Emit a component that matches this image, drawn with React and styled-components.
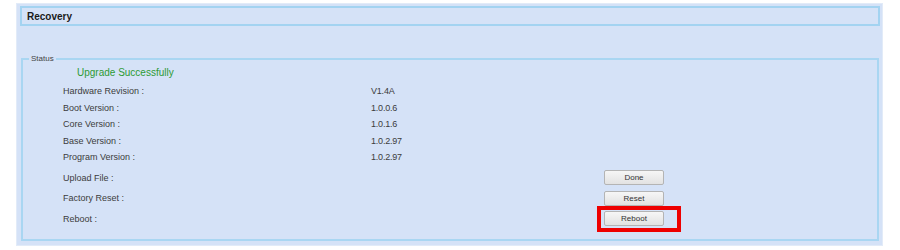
import React from "react";
import styled, { createGlobalStyle } from "styled-components";

const Global = createGlobalStyle`
  body {
    margin: 0;
    background: #ffffff;
    font-family: "Liberation Sans", Arial, sans-serif;
  }
`;

const Panel = styled.div`
  margin: 3px 0 0 16px;
  width: 867px;
  box-sizing: border-box;
  padding: 2px 2px 4px 3px;
  background: #d5e2f7;
  border: 1px solid #e2ebf8;
`;

const Header = styled.div`
  height: 20px;
  box-sizing: border-box;
  border: 2px solid #a3d3f1;
  padding-left: 5px;
  display: flex;
  align-items: center;
  font-size: 10px;
  font-weight: bold;
  color: #1a1a1a;
`;

const Spacer = styled.div`
  height: 28px;
`;

const Status = styled.fieldset`
  margin: 0 1px;
  padding: 0 0 10px 0;
  border: 2px solid #a9d6f2;
  min-width: 0;
`;

const Legend = styled.legend`
  margin-left: 6px;
  padding: 0 2px;
  font-size: 8px;
  line-height: 10px;
  color: #444;
`;

const Message = styled.div`
  padding: 2px 0 3px 54px;
  line-height: 14px;
  font-size: 10px;
  color: #2c9a34;
`;

const Rows = styled.div`
  display: grid;
  grid-template-columns: 308px 233px 60px;
  padding-left: 40px;
`;

const Cell = styled.div`
  height: ${(p) => (p.$tall ? "20.5px" : "16.5px")};
  margin-top: ${(p) => (p.$first ? "2px" : "0")};
  display: flex;
  align-items: center;
  font-size: 9px;
  color: #3c3c3c;
  letter-spacing: ${(p) => (p.$value ? "-0.2px" : "0")};
  position: relative;
`;

const Button = styled.button`
  width: 60px;
  height: 15px;
  padding: 0;
  border: 1px solid #b4b4b4;
  border-radius: 2px;
  background: linear-gradient(#f6f6f6, #e2e2e2);
  font-family: "Liberation Sans", Arial, sans-serif;
  font-size: 8px;
  color: #333;
`;

const Highlight = styled.div`
  position: absolute;
  left: -7px;
  top: -3px;
  width: 84px;
  height: 26px;
  box-sizing: border-box;
  border: 4px solid #ee0000;
  pointer-events: none;
`;

const info = [
  ["Hardware Revision :", "V1.4A"],
  ["Boot Version :", "1.0.0.6"],
  ["Core Version :", "1.0.1.6"],
  ["Base Version :", "1.0.2.97"],
  ["Program Version :", "1.0.2.97"],
];

const actions = [
  ["Upload File :", "Done"],
  ["Factory Reset :", "Reset"],
  ["Reboot :", "Reboot", true],
];

const App = () => {
  return (
    <>
      <Global />
      <Panel>
        <Header>Recovery</Header>
        <Spacer />
        <Status>
          <Legend>Status</Legend>
          <Message>Upgrade Successfully</Message>
          <Rows>
            {info.map(([label, value]) => (
              <React.Fragment key={label}>
                <Cell>{label}</Cell>
                <Cell $value>{value}</Cell>
                <Cell />
              </React.Fragment>
            ))}
            {actions.map(([label, text, marked], i) => (
              <React.Fragment key={label}>
                <Cell $tall $first={i === 0}>{label}</Cell>
                <Cell $tall $first={i === 0} />
                <Cell $tall $first={i === 0}>
                  <Button>{text}</Button>
                  {marked && <Highlight />}
                </Cell>
              </React.Fragment>
            ))}
          </Rows>
        </Status>
      </Panel>
    </>
  );
};

export default App;
